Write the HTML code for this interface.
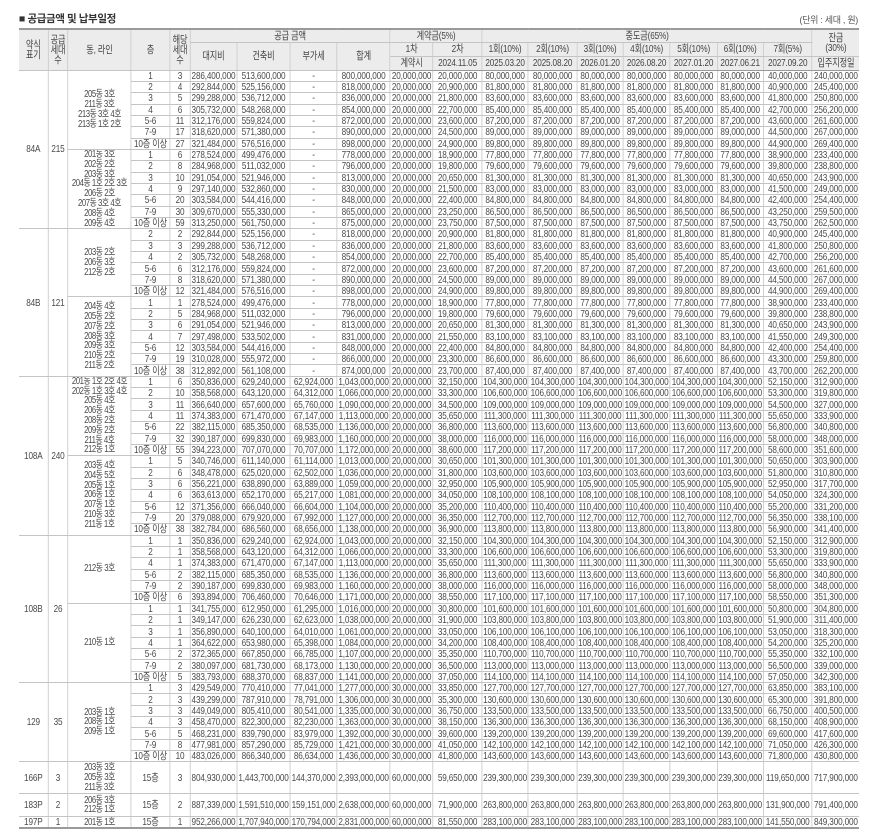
<!DOCTYPE html>
<html><head><meta charset="utf-8">
<style>
html,body{margin:0;padding:0;background:#fff;width:871px;height:840px;overflow:hidden}
body{font-family:"Liberation Sans","Noto Sans CJK KR",sans-serif;color:#4a4a4a}
.title{position:absolute;left:19px;top:11px;font-size:10.5px;font-weight:bold;color:#333;letter-spacing:-0.4px}
.unit{position:absolute;right:13px;top:13px;font-size:9px;color:#555;letter-spacing:-0.3px}
table{position:absolute;left:19px;top:28px;border-collapse:collapse;table-layout:fixed;width:1077px;transform:scaleX(0.78);transform-origin:0 0;border-top:2px solid #9a9a9a;border-bottom:2px solid #9a9a9a}
td,th{padding:0;text-align:center;white-space:nowrap;overflow:hidden;font-size:10.5px;letter-spacing:-0.2px;line-height:10px;border:1px solid #c4c4c4}
th{background:#ececec;font-weight:normal;color:#444;font-size:10.5px}
tr.h1{height:13px}tr.h2{height:14px}tr.h3{height:14px}
thead tr.h3 th{border-bottom:1px solid #999}
tbody tr{height:11.35px}
tr.g td{border-top:1px solid #8c8c8c}
td.d{font-size:10px;letter-spacing:-0.6px;line-height:9.8px}
td:first-child,th:first-child{border-left:none}
td:last-child,th:last-child{border-right:none}
</style></head><body>
<div class="title">■ 공급금액 및 납부일정</div>
<div class="unit">(단위 : 세대 , 원)</div>
<table>
<colgroup><col style="width:37.2px"><col style="width:25.6px"><col style="width:80.8px"><col style="width:50px"><col style="width:25.6px"><col style="width:60.3px"><col style="width:68px"><col style="width:60.3px"><col style="width:68px"><col style="width:55.1px"><col style="width:62.8px"><col style="width:59px"><col style="width:62.8px"><col style="width:59px"><col style="width:60.3px"><col style="width:60.3px"><col style="width:59px"><col style="width:62.8px"><col style="width:60.3px"></colgroup>
<thead>
<tr class="h1"><th rowspan="3">약식<br>표기</th><th rowspan="3">공급<br>세대<br>수</th><th rowspan="3">동, 라인</th><th rowspan="3">층</th><th rowspan="3">해당<br>세대<br>수</th><th colspan="4">공급 금액</th><th colspan="2">계약금(5%)</th><th colspan="7">중도금(65%)</th><th rowspan="2">잔금<br>(30%)</th></tr>
<tr class="h2"><th rowspan="2">대지비</th><th rowspan="2">건축비</th><th rowspan="2">부가세</th><th rowspan="2">합계</th><th>1차</th><th>2차</th><th>1회(10%)</th><th>2회(10%)</th><th>3회(10%)</th><th>4회(10%)</th><th>5회(10%)</th><th>6회(10%)</th><th>7회(5%)</th></tr>
<tr class="h3"><th>계약시</th><th>2024.11.05</th><th>2025.03.20</th><th>2025.08.20</th><th>2026.01.20</th><th>2026.08.20</th><th>2027.01.20</th><th>2027.06.21</th><th>2027.09.20</th><th>입주지정일</th></tr>
</thead>
<tbody>
<tr class="g"><td rowspan="14">84A</td><td rowspan="14">215</td><td rowspan="7" class="d">205동 3호<br>211동 3호<br>213동 3호 4호<br>213동 1호 2호</td><td>1</td><td>3</td><td>286,400,000</td><td>513,600,000</td><td>-</td><td>800,000,000</td><td>20,000,000</td><td>20,000,000</td><td>80,000,000</td><td>80,000,000</td><td>80,000,000</td><td>80,000,000</td><td>80,000,000</td><td>80,000,000</td><td>40,000,000</td><td>240,000,000</td></tr>
<tr><td>2</td><td>4</td><td>292,844,000</td><td>525,156,000</td><td>-</td><td>818,000,000</td><td>20,000,000</td><td>20,900,000</td><td>81,800,000</td><td>81,800,000</td><td>81,800,000</td><td>81,800,000</td><td>81,800,000</td><td>81,800,000</td><td>40,900,000</td><td>245,400,000</td></tr>
<tr><td>3</td><td>5</td><td>299,288,000</td><td>536,712,000</td><td>-</td><td>836,000,000</td><td>20,000,000</td><td>21,800,000</td><td>83,600,000</td><td>83,600,000</td><td>83,600,000</td><td>83,600,000</td><td>83,600,000</td><td>83,600,000</td><td>41,800,000</td><td>250,800,000</td></tr>
<tr><td>4</td><td>6</td><td>305,732,000</td><td>548,268,000</td><td>-</td><td>854,000,000</td><td>20,000,000</td><td>22,700,000</td><td>85,400,000</td><td>85,400,000</td><td>85,400,000</td><td>85,400,000</td><td>85,400,000</td><td>85,400,000</td><td>42,700,000</td><td>256,200,000</td></tr>
<tr><td>5-6</td><td>11</td><td>312,176,000</td><td>559,824,000</td><td>-</td><td>872,000,000</td><td>20,000,000</td><td>23,600,000</td><td>87,200,000</td><td>87,200,000</td><td>87,200,000</td><td>87,200,000</td><td>87,200,000</td><td>87,200,000</td><td>43,600,000</td><td>261,600,000</td></tr>
<tr><td>7-9</td><td>17</td><td>318,620,000</td><td>571,380,000</td><td>-</td><td>890,000,000</td><td>20,000,000</td><td>24,500,000</td><td>89,000,000</td><td>89,000,000</td><td>89,000,000</td><td>89,000,000</td><td>89,000,000</td><td>89,000,000</td><td>44,500,000</td><td>267,000,000</td></tr>
<tr><td>10층 이상</td><td>27</td><td>321,484,000</td><td>576,516,000</td><td>-</td><td>898,000,000</td><td>20,000,000</td><td>24,900,000</td><td>89,800,000</td><td>89,800,000</td><td>89,800,000</td><td>89,800,000</td><td>89,800,000</td><td>89,800,000</td><td>44,900,000</td><td>269,400,000</td></tr>
<tr><td rowspan="7" class="d">201동 3호<br>202동 2호<br>203동 3호<br>204동 1호 2호 3호<br>206동 2호<br>207동 3호 4호<br>208동 4호<br>209동 4호</td><td>1</td><td>6</td><td>278,524,000</td><td>499,476,000</td><td>-</td><td>778,000,000</td><td>20,000,000</td><td>18,900,000</td><td>77,800,000</td><td>77,800,000</td><td>77,800,000</td><td>77,800,000</td><td>77,800,000</td><td>77,800,000</td><td>38,900,000</td><td>233,400,000</td></tr>
<tr><td>2</td><td>8</td><td>284,968,000</td><td>511,032,000</td><td>-</td><td>796,000,000</td><td>20,000,000</td><td>19,800,000</td><td>79,600,000</td><td>79,600,000</td><td>79,600,000</td><td>79,600,000</td><td>79,600,000</td><td>79,600,000</td><td>39,800,000</td><td>238,800,000</td></tr>
<tr><td>3</td><td>10</td><td>291,054,000</td><td>521,946,000</td><td>-</td><td>813,000,000</td><td>20,000,000</td><td>20,650,000</td><td>81,300,000</td><td>81,300,000</td><td>81,300,000</td><td>81,300,000</td><td>81,300,000</td><td>81,300,000</td><td>40,650,000</td><td>243,900,000</td></tr>
<tr><td>4</td><td>9</td><td>297,140,000</td><td>532,860,000</td><td>-</td><td>830,000,000</td><td>20,000,000</td><td>21,500,000</td><td>83,000,000</td><td>83,000,000</td><td>83,000,000</td><td>83,000,000</td><td>83,000,000</td><td>83,000,000</td><td>41,500,000</td><td>249,000,000</td></tr>
<tr><td>5-6</td><td>20</td><td>303,584,000</td><td>544,416,000</td><td>-</td><td>848,000,000</td><td>20,000,000</td><td>22,400,000</td><td>84,800,000</td><td>84,800,000</td><td>84,800,000</td><td>84,800,000</td><td>84,800,000</td><td>84,800,000</td><td>42,400,000</td><td>254,400,000</td></tr>
<tr><td>7-9</td><td>30</td><td>309,670,000</td><td>555,330,000</td><td>-</td><td>865,000,000</td><td>20,000,000</td><td>23,250,000</td><td>86,500,000</td><td>86,500,000</td><td>86,500,000</td><td>86,500,000</td><td>86,500,000</td><td>86,500,000</td><td>43,250,000</td><td>259,500,000</td></tr>
<tr><td>10층 이상</td><td>59</td><td>313,250,000</td><td>561,750,000</td><td>-</td><td>875,000,000</td><td>20,000,000</td><td>23,750,000</td><td>87,500,000</td><td>87,500,000</td><td>87,500,000</td><td>87,500,000</td><td>87,500,000</td><td>87,500,000</td><td>43,750,000</td><td>262,500,000</td></tr>

<tr class="g"><td rowspan="13">84B</td><td rowspan="13">121</td><td rowspan="6" class="d">203동 2호<br>206동 3호<br>212동 2호</td><td>2</td><td>2</td><td>292,844,000</td><td>525,156,000</td><td>-</td><td>818,000,000</td><td>20,000,000</td><td>20,900,000</td><td>81,800,000</td><td>81,800,000</td><td>81,800,000</td><td>81,800,000</td><td>81,800,000</td><td>81,800,000</td><td>40,900,000</td><td>245,400,000</td></tr>
<tr><td>3</td><td>3</td><td>299,288,000</td><td>536,712,000</td><td>-</td><td>836,000,000</td><td>20,000,000</td><td>21,800,000</td><td>83,600,000</td><td>83,600,000</td><td>83,600,000</td><td>83,600,000</td><td>83,600,000</td><td>83,600,000</td><td>41,800,000</td><td>250,800,000</td></tr>
<tr><td>4</td><td>2</td><td>305,732,000</td><td>548,268,000</td><td>-</td><td>854,000,000</td><td>20,000,000</td><td>22,700,000</td><td>85,400,000</td><td>85,400,000</td><td>85,400,000</td><td>85,400,000</td><td>85,400,000</td><td>85,400,000</td><td>42,700,000</td><td>256,200,000</td></tr>
<tr><td>5-6</td><td>6</td><td>312,176,000</td><td>559,824,000</td><td>-</td><td>872,000,000</td><td>20,000,000</td><td>23,600,000</td><td>87,200,000</td><td>87,200,000</td><td>87,200,000</td><td>87,200,000</td><td>87,200,000</td><td>87,200,000</td><td>43,600,000</td><td>261,600,000</td></tr>
<tr><td>7-9</td><td>8</td><td>318,620,000</td><td>571,380,000</td><td>-</td><td>890,000,000</td><td>20,000,000</td><td>24,500,000</td><td>89,000,000</td><td>89,000,000</td><td>89,000,000</td><td>89,000,000</td><td>89,000,000</td><td>89,000,000</td><td>44,500,000</td><td>267,000,000</td></tr>
<tr><td>10층 이상</td><td>12</td><td>321,484,000</td><td>576,516,000</td><td>-</td><td>898,000,000</td><td>20,000,000</td><td>24,900,000</td><td>89,800,000</td><td>89,800,000</td><td>89,800,000</td><td>89,800,000</td><td>89,800,000</td><td>89,800,000</td><td>44,900,000</td><td>269,400,000</td></tr>
<tr><td rowspan="7" class="d">204동 4호<br>205동 2호<br>207동 2호<br>208동 3호<br>209동 3호<br>210동 2호<br>211동 2호</td><td>1</td><td>1</td><td>278,524,000</td><td>499,476,000</td><td>-</td><td>778,000,000</td><td>20,000,000</td><td>18,900,000</td><td>77,800,000</td><td>77,800,000</td><td>77,800,000</td><td>77,800,000</td><td>77,800,000</td><td>77,800,000</td><td>38,900,000</td><td>233,400,000</td></tr>
<tr><td>2</td><td>5</td><td>284,968,000</td><td>511,032,000</td><td>-</td><td>796,000,000</td><td>20,000,000</td><td>19,800,000</td><td>79,600,000</td><td>79,600,000</td><td>79,600,000</td><td>79,600,000</td><td>79,600,000</td><td>79,600,000</td><td>39,800,000</td><td>238,800,000</td></tr>
<tr><td>3</td><td>6</td><td>291,054,000</td><td>521,946,000</td><td>-</td><td>813,000,000</td><td>20,000,000</td><td>20,650,000</td><td>81,300,000</td><td>81,300,000</td><td>81,300,000</td><td>81,300,000</td><td>81,300,000</td><td>81,300,000</td><td>40,650,000</td><td>243,900,000</td></tr>
<tr><td>4</td><td>7</td><td>297,498,000</td><td>533,502,000</td><td>-</td><td>831,000,000</td><td>20,000,000</td><td>21,550,000</td><td>83,100,000</td><td>83,100,000</td><td>83,100,000</td><td>83,100,000</td><td>83,100,000</td><td>83,100,000</td><td>41,550,000</td><td>249,300,000</td></tr>
<tr><td>5-6</td><td>12</td><td>303,584,000</td><td>544,416,000</td><td>-</td><td>848,000,000</td><td>20,000,000</td><td>22,400,000</td><td>84,800,000</td><td>84,800,000</td><td>84,800,000</td><td>84,800,000</td><td>84,800,000</td><td>84,800,000</td><td>42,400,000</td><td>254,400,000</td></tr>
<tr><td>7-9</td><td>19</td><td>310,028,000</td><td>555,972,000</td><td>-</td><td>866,000,000</td><td>20,000,000</td><td>23,300,000</td><td>86,600,000</td><td>86,600,000</td><td>86,600,000</td><td>86,600,000</td><td>86,600,000</td><td>86,600,000</td><td>43,300,000</td><td>259,800,000</td></tr>
<tr><td>10층 이상</td><td>38</td><td>312,892,000</td><td>561,108,000</td><td>-</td><td>874,000,000</td><td>20,000,000</td><td>23,700,000</td><td>87,400,000</td><td>87,400,000</td><td>87,400,000</td><td>87,400,000</td><td>87,400,000</td><td>87,400,000</td><td>43,700,000</td><td>262,200,000</td></tr>

<tr class="g"><td rowspan="14">108A</td><td rowspan="14">240</td><td rowspan="7" class="d">201동 1호 2호 4호<br>202동 1호 3호 4호<br>205동 4호<br>206동 4호<br>208동 2호<br>209동 2호<br>211동 4호<br>212동 1호</td><td>1</td><td>6</td><td>350,836,000</td><td>629,240,000</td><td>62,924,000</td><td>1,043,000,000</td><td>20,000,000</td><td>32,150,000</td><td>104,300,000</td><td>104,300,000</td><td>104,300,000</td><td>104,300,000</td><td>104,300,000</td><td>104,300,000</td><td>52,150,000</td><td>312,900,000</td></tr>
<tr><td>2</td><td>10</td><td>358,568,000</td><td>643,120,000</td><td>64,312,000</td><td>1,066,000,000</td><td>20,000,000</td><td>33,300,000</td><td>106,600,000</td><td>106,600,000</td><td>106,600,000</td><td>106,600,000</td><td>106,600,000</td><td>106,600,000</td><td>53,300,000</td><td>319,800,000</td></tr>
<tr><td>3</td><td>11</td><td>366,640,000</td><td>657,600,000</td><td>65,760,000</td><td>1,090,000,000</td><td>20,000,000</td><td>34,500,000</td><td>109,000,000</td><td>109,000,000</td><td>109,000,000</td><td>109,000,000</td><td>109,000,000</td><td>109,000,000</td><td>54,500,000</td><td>327,000,000</td></tr>
<tr><td>4</td><td>11</td><td>374,383,000</td><td>671,470,000</td><td>67,147,000</td><td>1,113,000,000</td><td>20,000,000</td><td>35,650,000</td><td>111,300,000</td><td>111,300,000</td><td>111,300,000</td><td>111,300,000</td><td>111,300,000</td><td>111,300,000</td><td>55,650,000</td><td>333,900,000</td></tr>
<tr><td>5-6</td><td>22</td><td>382,115,000</td><td>685,350,000</td><td>68,535,000</td><td>1,136,000,000</td><td>20,000,000</td><td>36,800,000</td><td>113,600,000</td><td>113,600,000</td><td>113,600,000</td><td>113,600,000</td><td>113,600,000</td><td>113,600,000</td><td>56,800,000</td><td>340,800,000</td></tr>
<tr><td>7-9</td><td>32</td><td>390,187,000</td><td>699,830,000</td><td>69,983,000</td><td>1,160,000,000</td><td>20,000,000</td><td>38,000,000</td><td>116,000,000</td><td>116,000,000</td><td>116,000,000</td><td>116,000,000</td><td>116,000,000</td><td>116,000,000</td><td>58,000,000</td><td>348,000,000</td></tr>
<tr><td>10층 이상</td><td>55</td><td>394,223,000</td><td>707,070,000</td><td>70,707,000</td><td>1,172,000,000</td><td>20,000,000</td><td>38,600,000</td><td>117,200,000</td><td>117,200,000</td><td>117,200,000</td><td>117,200,000</td><td>117,200,000</td><td>117,200,000</td><td>58,600,000</td><td>351,600,000</td></tr>
<tr><td rowspan="7" class="d">203동 4호<br>204동 5호<br>205동 1호<br>206동 1호<br>207동 1호<br>210동 3호<br>211동 1호</td><td>1</td><td>5</td><td>340,746,000</td><td>611,140,000</td><td>61,114,000</td><td>1,013,000,000</td><td>20,000,000</td><td>30,650,000</td><td>101,300,000</td><td>101,300,000</td><td>101,300,000</td><td>101,300,000</td><td>101,300,000</td><td>101,300,000</td><td>50,650,000</td><td>303,900,000</td></tr>
<tr><td>2</td><td>6</td><td>348,478,000</td><td>625,020,000</td><td>62,502,000</td><td>1,036,000,000</td><td>20,000,000</td><td>31,800,000</td><td>103,600,000</td><td>103,600,000</td><td>103,600,000</td><td>103,600,000</td><td>103,600,000</td><td>103,600,000</td><td>51,800,000</td><td>310,800,000</td></tr>
<tr><td>3</td><td>6</td><td>356,221,000</td><td>638,890,000</td><td>63,889,000</td><td>1,059,000,000</td><td>20,000,000</td><td>32,950,000</td><td>105,900,000</td><td>105,900,000</td><td>105,900,000</td><td>105,900,000</td><td>105,900,000</td><td>105,900,000</td><td>52,950,000</td><td>317,700,000</td></tr>
<tr><td>4</td><td>6</td><td>363,613,000</td><td>652,170,000</td><td>65,217,000</td><td>1,081,000,000</td><td>20,000,000</td><td>34,050,000</td><td>108,100,000</td><td>108,100,000</td><td>108,100,000</td><td>108,100,000</td><td>108,100,000</td><td>108,100,000</td><td>54,050,000</td><td>324,300,000</td></tr>
<tr><td>5-6</td><td>12</td><td>371,356,000</td><td>666,040,000</td><td>66,604,000</td><td>1,104,000,000</td><td>20,000,000</td><td>35,200,000</td><td>110,400,000</td><td>110,400,000</td><td>110,400,000</td><td>110,400,000</td><td>110,400,000</td><td>110,400,000</td><td>55,200,000</td><td>331,200,000</td></tr>
<tr><td>7-9</td><td>20</td><td>379,088,000</td><td>679,920,000</td><td>67,992,000</td><td>1,127,000,000</td><td>20,000,000</td><td>36,350,000</td><td>112,700,000</td><td>112,700,000</td><td>112,700,000</td><td>112,700,000</td><td>112,700,000</td><td>112,700,000</td><td>56,350,000</td><td>338,100,000</td></tr>
<tr><td>10층 이상</td><td>38</td><td>382,784,000</td><td>686,560,000</td><td>68,656,000</td><td>1,138,000,000</td><td>20,000,000</td><td>36,900,000</td><td>113,800,000</td><td>113,800,000</td><td>113,800,000</td><td>113,800,000</td><td>113,800,000</td><td>113,800,000</td><td>56,900,000</td><td>341,400,000</td></tr>

<tr class="g"><td rowspan="13">108B</td><td rowspan="13">26</td><td rowspan="6" class="d">212동 3호</td><td>1</td><td>1</td><td>350,836,000</td><td>629,240,000</td><td>62,924,000</td><td>1,043,000,000</td><td>20,000,000</td><td>32,150,000</td><td>104,300,000</td><td>104,300,000</td><td>104,300,000</td><td>104,300,000</td><td>104,300,000</td><td>104,300,000</td><td>52,150,000</td><td>312,900,000</td></tr>
<tr><td>2</td><td>1</td><td>358,568,000</td><td>643,120,000</td><td>64,312,000</td><td>1,066,000,000</td><td>20,000,000</td><td>33,300,000</td><td>106,600,000</td><td>106,600,000</td><td>106,600,000</td><td>106,600,000</td><td>106,600,000</td><td>106,600,000</td><td>53,300,000</td><td>319,800,000</td></tr>
<tr><td>4</td><td>1</td><td>374,383,000</td><td>671,470,000</td><td>67,147,000</td><td>1,113,000,000</td><td>20,000,000</td><td>35,650,000</td><td>111,300,000</td><td>111,300,000</td><td>111,300,000</td><td>111,300,000</td><td>111,300,000</td><td>111,300,000</td><td>55,650,000</td><td>333,900,000</td></tr>
<tr><td>5-6</td><td>2</td><td>382,115,000</td><td>685,350,000</td><td>68,535,000</td><td>1,136,000,000</td><td>20,000,000</td><td>36,800,000</td><td>113,600,000</td><td>113,600,000</td><td>113,600,000</td><td>113,600,000</td><td>113,600,000</td><td>113,600,000</td><td>56,800,000</td><td>340,800,000</td></tr>
<tr><td>7-9</td><td>2</td><td>390,187,000</td><td>699,830,000</td><td>69,983,000</td><td>1,160,000,000</td><td>20,000,000</td><td>38,000,000</td><td>116,000,000</td><td>116,000,000</td><td>116,000,000</td><td>116,000,000</td><td>116,000,000</td><td>116,000,000</td><td>58,000,000</td><td>348,000,000</td></tr>
<tr><td>10층 이상</td><td>6</td><td>393,894,000</td><td>706,460,000</td><td>70,646,000</td><td>1,171,000,000</td><td>20,000,000</td><td>38,550,000</td><td>117,100,000</td><td>117,100,000</td><td>117,100,000</td><td>117,100,000</td><td>117,100,000</td><td>117,100,000</td><td>58,550,000</td><td>351,300,000</td></tr>
<tr><td rowspan="7" class="d">210동 1호</td><td>1</td><td>1</td><td>341,755,000</td><td>612,950,000</td><td>61,295,000</td><td>1,016,000,000</td><td>20,000,000</td><td>30,800,000</td><td>101,600,000</td><td>101,600,000</td><td>101,600,000</td><td>101,600,000</td><td>101,600,000</td><td>101,600,000</td><td>50,800,000</td><td>304,800,000</td></tr>
<tr><td>2</td><td>1</td><td>349,147,000</td><td>626,230,000</td><td>62,623,000</td><td>1,038,000,000</td><td>20,000,000</td><td>31,900,000</td><td>103,800,000</td><td>103,800,000</td><td>103,800,000</td><td>103,800,000</td><td>103,800,000</td><td>103,800,000</td><td>51,900,000</td><td>311,400,000</td></tr>
<tr><td>3</td><td>1</td><td>356,890,000</td><td>640,100,000</td><td>64,010,000</td><td>1,061,000,000</td><td>20,000,000</td><td>33,050,000</td><td>106,100,000</td><td>106,100,000</td><td>106,100,000</td><td>106,100,000</td><td>106,100,000</td><td>106,100,000</td><td>53,050,000</td><td>318,300,000</td></tr>
<tr><td>4</td><td>1</td><td>364,622,000</td><td>653,980,000</td><td>65,398,000</td><td>1,084,000,000</td><td>20,000,000</td><td>34,200,000</td><td>108,400,000</td><td>108,400,000</td><td>108,400,000</td><td>108,400,000</td><td>108,400,000</td><td>108,400,000</td><td>54,200,000</td><td>325,200,000</td></tr>
<tr><td>5-6</td><td>2</td><td>372,365,000</td><td>667,850,000</td><td>66,785,000</td><td>1,107,000,000</td><td>20,000,000</td><td>35,350,000</td><td>110,700,000</td><td>110,700,000</td><td>110,700,000</td><td>110,700,000</td><td>110,700,000</td><td>110,700,000</td><td>55,350,000</td><td>332,100,000</td></tr>
<tr><td>7-9</td><td>2</td><td>380,097,000</td><td>681,730,000</td><td>68,173,000</td><td>1,130,000,000</td><td>20,000,000</td><td>36,500,000</td><td>113,000,000</td><td>113,000,000</td><td>113,000,000</td><td>113,000,000</td><td>113,000,000</td><td>113,000,000</td><td>56,500,000</td><td>339,000,000</td></tr>
<tr><td>10층 이상</td><td>5</td><td>383,793,000</td><td>688,370,000</td><td>68,837,000</td><td>1,141,000,000</td><td>20,000,000</td><td>37,050,000</td><td>114,100,000</td><td>114,100,000</td><td>114,100,000</td><td>114,100,000</td><td>114,100,000</td><td>114,100,000</td><td>57,050,000</td><td>342,300,000</td></tr>

<tr class="g"><td rowspan="7">129</td><td rowspan="7">35</td><td rowspan="7" class="d">203동 1호<br>208동 1호<br>209동 1호</td><td>1</td><td>3</td><td>429,549,000</td><td>770,410,000</td><td>77,041,000</td><td>1,277,000,000</td><td>30,000,000</td><td>33,850,000</td><td>127,700,000</td><td>127,700,000</td><td>127,700,000</td><td>127,700,000</td><td>127,700,000</td><td>127,700,000</td><td>63,850,000</td><td>383,100,000</td></tr>
<tr><td>2</td><td>3</td><td>439,299,000</td><td>787,910,000</td><td>78,791,000</td><td>1,306,000,000</td><td>30,000,000</td><td>35,300,000</td><td>130,600,000</td><td>130,600,000</td><td>130,600,000</td><td>130,600,000</td><td>130,600,000</td><td>130,600,000</td><td>65,300,000</td><td>391,800,000</td></tr>
<tr><td>3</td><td>3</td><td>449,049,000</td><td>805,410,000</td><td>80,541,000</td><td>1,335,000,000</td><td>30,000,000</td><td>36,750,000</td><td>133,500,000</td><td>133,500,000</td><td>133,500,000</td><td>133,500,000</td><td>133,500,000</td><td>133,500,000</td><td>66,750,000</td><td>400,500,000</td></tr>
<tr><td>4</td><td>3</td><td>458,470,000</td><td>822,300,000</td><td>82,230,000</td><td>1,363,000,000</td><td>30,000,000</td><td>38,150,000</td><td>136,300,000</td><td>136,300,000</td><td>136,300,000</td><td>136,300,000</td><td>136,300,000</td><td>136,300,000</td><td>68,150,000</td><td>408,900,000</td></tr>
<tr><td>5-6</td><td>5</td><td>468,231,000</td><td>839,790,000</td><td>83,979,000</td><td>1,392,000,000</td><td>30,000,000</td><td>39,600,000</td><td>139,200,000</td><td>139,200,000</td><td>139,200,000</td><td>139,200,000</td><td>139,200,000</td><td>139,200,000</td><td>69,600,000</td><td>417,600,000</td></tr>
<tr><td>7-9</td><td>8</td><td>477,981,000</td><td>857,290,000</td><td>85,729,000</td><td>1,421,000,000</td><td>30,000,000</td><td>41,050,000</td><td>142,100,000</td><td>142,100,000</td><td>142,100,000</td><td>142,100,000</td><td>142,100,000</td><td>142,100,000</td><td>71,050,000</td><td>426,300,000</td></tr>
<tr><td>10층 이상</td><td>10</td><td>483,026,000</td><td>866,340,000</td><td>86,634,000</td><td>1,436,000,000</td><td>30,000,000</td><td>41,800,000</td><td>143,600,000</td><td>143,600,000</td><td>143,600,000</td><td>143,600,000</td><td>143,600,000</td><td>143,600,000</td><td>71,800,000</td><td>430,800,000</td></tr>

<tr class="g" style="height:32px"><td>166P</td><td>3</td><td class="d">203동 3호<br>205동 3호<br>211동 3호</td><td>15층</td><td>3</td><td>804,930,000</td><td>1,443,700,000</td><td>144,370,000</td><td>2,393,000,000</td><td>60,000,000</td><td>59,650,000</td><td>239,300,000</td><td>239,300,000</td><td>239,300,000</td><td>239,300,000</td><td>239,300,000</td><td>239,300,000</td><td>119,650,000</td><td>717,900,000</td></tr>
<tr class="g" style="height:23px"><td>183P</td><td>2</td><td class="d">206동 3호<br>212동 1호</td><td>15층</td><td>2</td><td>887,339,000</td><td>1,591,510,000</td><td>159,151,000</td><td>2,638,000,000</td><td>60,000,000</td><td>71,900,000</td><td>263,800,000</td><td>263,800,000</td><td>263,800,000</td><td>263,800,000</td><td>263,800,000</td><td>263,800,000</td><td>131,900,000</td><td>791,400,000</td></tr>
<tr class="g" style="height:11px"><td>197P</td><td>1</td><td class="d">201동 1호</td><td>15층</td><td>1</td><td>952,266,000</td><td>1,707,940,000</td><td>170,794,000</td><td>2,831,000,000</td><td>60,000,000</td><td>81,550,000</td><td>283,100,000</td><td>283,100,000</td><td>283,100,000</td><td>283,100,000</td><td>283,100,000</td><td>283,100,000</td><td>141,550,000</td><td>849,300,000</td></tr>
</tbody>
</table>
</body></html>
